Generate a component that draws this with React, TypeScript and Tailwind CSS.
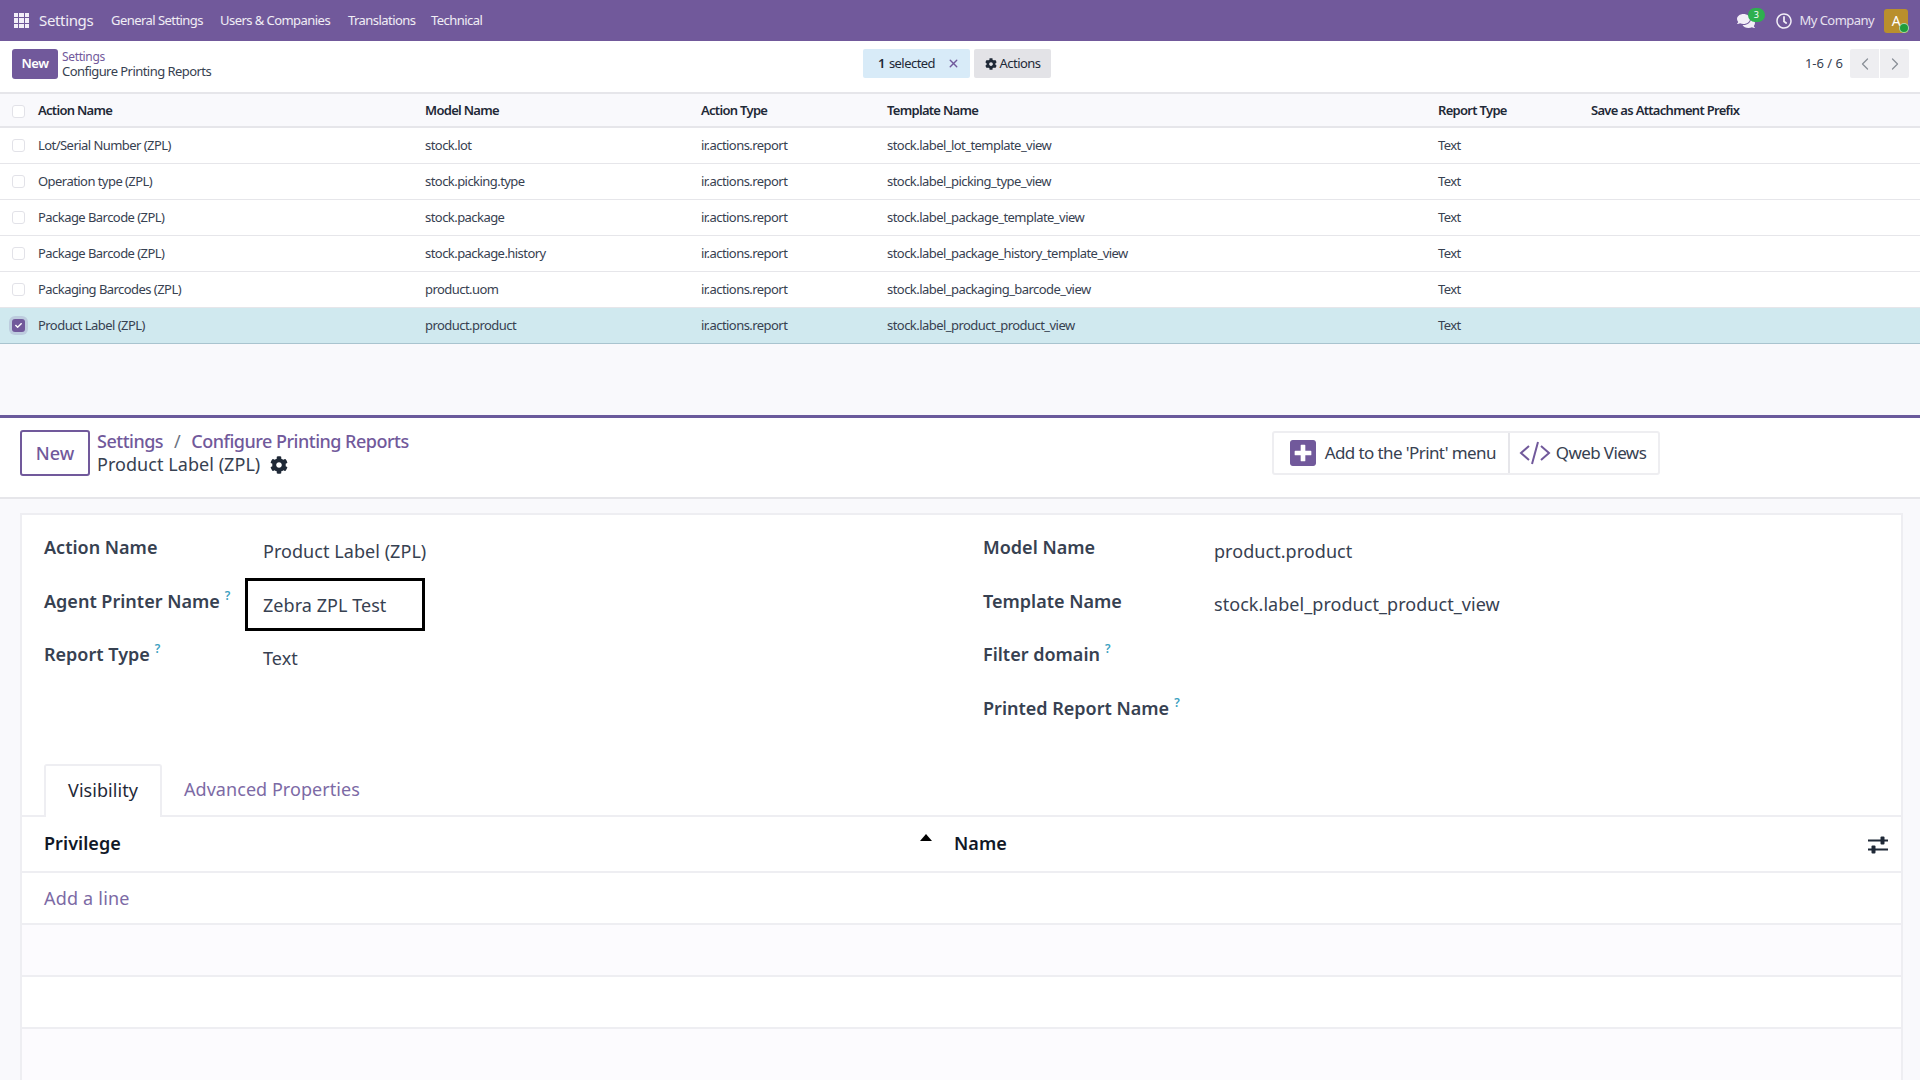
import React from "react";
import { FaCog, FaComments, FaRegClock, FaPlusSquare, FaCheck } from "react-icons/fa";
import { ChevronLeft, ChevronRight, X } from "lucide-react";

const rows = [
  ["Lot/Serial Number (ZPL)", "stock.lot", "ir.actions.report", "stock.label_lot_template_view", "Text"],
  ["Operation type (ZPL)", "stock.picking.type", "ir.actions.report", "stock.label_picking_type_view", "Text"],
  ["Package Barcode (ZPL)", "stock.package", "ir.actions.report", "stock.label_package_template_view", "Text"],
  ["Package Barcode (ZPL)", "stock.package.history", "ir.actions.report", "stock.label_package_history_template_view", "Text"],
  ["Packaging Barcodes (ZPL)", "product.uom", "ir.actions.report", "stock.label_packaging_barcode_view", "Text"],
  ["Product Label (ZPL)", "product.product", "ir.actions.report", "stock.label_product_product_view", "Text"],
];

const cols = "grid grid-cols-[38px_387px_276px_186px_551px_153px_1fr] items-center";

function Box() {
  return <span className="ml-[12px] block w-[13px] h-[13px] rounded-[3px] border border-[#e2e2e8] bg-white" />;
}

function Help() {
  return <sup className="ml-[5px] text-[12px] font-semibold text-[#3aa0c0] -top-[8px] relative">?</sup>;
}

function Label({ children, help }: { children: React.ReactNode; help?: boolean }) {
  return (
    <span className="text-[18px] font-semibold tracking-[0px] text-[#374151] whitespace-nowrap">
      {children}
      {help && <Help />}
    </span>
  );
}

export default function App() {
  return (
    <div className="h-[1080px] w-[1920px] overflow-hidden flex flex-col bg-[#f9f9fc] font-['Noto_Sans',sans-serif] text-[13px] tracking-[-0.55px] text-[#374151]">
      <header className="h-[41px] shrink-0 bg-[#71599b] flex items-center text-white/90">
        <span className="ml-[14px] grid grid-cols-3 gap-[1px] w-[15px] h-[15px]">
          {Array.from({ length: 9 }).map((_, i) => (
            <span key={i} className="bg-[#f3eff8]" />
          ))}
        </span>
        <span className="ml-[10px] text-[15px] tracking-[-0.35px] w-[72px]">Settings</span>
        <nav className="flex mt-[1px]">
          <span className="w-[109px]">General Settings</span>
          <span className="w-[128px]">Users &amp; Companies</span>
          <span className="w-[83px]">Translations</span>
          <span>Technical</span>
        </nav>
        <div className="ml-auto flex items-center">
          <span className="relative mr-[21px]">
            <FaComments className="w-[18px] h-[16px] text-[#f3eff8]" />
            <span className="absolute -top-[5px] left-[11px] w-[17px] h-[14px] rounded-full bg-[#2eb04f] text-[9px] leading-[14px] text-center text-white">3</span>
          </span>
          <FaRegClock className="w-[16px] h-[16px] text-[#f3eff8] mr-[8px]" />
          <span className="mr-[10px] text-[#e8e2f0]">My Company</span>
          <span className="relative w-[24px] h-[24px] mr-[12px] rounded-[3px] bg-[#b98f2d] flex items-center justify-center text-white text-[14px]">
            A
            <span className="absolute -right-[1px] bottom-0 w-[10px] h-[10px] rounded-full bg-[#1f9d3a] border-[1px] border-white/60" />
          </span>
        </div>
      </header>

      <div className="h-[53px] shrink-0 bg-white border-b-2 border-[#e6e6ea] flex items-start pt-[8px]">
        <div className="w-[863px] flex pl-[12px]">
          <button className="w-[46px] h-[30px] rounded-[3px] bg-[#71599b] text-white font-semibold">New</button>
          <div className="ml-[4px] pt-[1px]">
            <div className="text-[12px] tracking-[-0.35px] text-[#71599b] leading-[14px]">Settings</div>
            <div className="leading-[15px]">Configure Printing Reports</div>
          </div>
        </div>
        <div className="w-[107px] h-[29px] rounded-[2px] bg-[#d8ebf8] flex items-center pl-[15px] text-[#1f2937]">
          <b className="font-semibold">1</b>
          <span className="ml-[4px]">selected</span>
          <X className="ml-[12px] w-[13px] h-[13px] text-[#71599b]" strokeWidth={2.5} />
        </div>
        <div className="ml-[4px] w-[77px] h-[29px] rounded-[2px] bg-[#e3e3e7] flex items-center justify-center text-[#1f2937]">
          <FaCog className="w-[12px] h-[12px] mr-[3px]" />
          Actions
        </div>
        <div className="ml-auto flex items-center h-[29px] mr-[11px]">
          <span className="mr-[7px] tracking-[0px]">1-6 / 6</span>
          <span className="w-[29px] h-[29px] bg-[#eeeef1] flex items-center justify-center mr-[1px] rounded-l-[2px]">
            <ChevronLeft className="w-[20px] h-[20px] text-[#8a8f98]" strokeWidth={1.5} />
          </span>
          <span className="w-[29px] h-[29px] bg-[#eeeef1] flex items-center justify-center rounded-r-[2px]">
            <ChevronRight className="w-[20px] h-[20px] text-[#8a8f98]" strokeWidth={1.5} />
          </span>
        </div>
      </div>

      <div className="bg-white">
        <div className={`${cols} h-[34px] pt-[2px] bg-[#f9f9fc] border-b-2 border-[#e6e6ea] font-semibold tracking-[-0.7px] text-[#1f2937]`}>
          <Box />
          <span>Action Name</span>
          <span>Model Name</span>
          <span>Action Type</span>
          <span>Template Name</span>
          <span>Report Type</span>
          <span>Save as Attachment Prefix</span>
        </div>
        {rows.map((r, i) => {
          const sel = i === 5;
          return (
            <div
              key={i}
              className={`${cols} h-[36px] border-b ${sel ? "bg-[#d0e9ef] border-[#a9c4cf]" : "border-[#e6e6ea]"}`}
            >
              {sel ? (
                <span className="ml-[12px] w-[13px] h-[13px] rounded-[3px] bg-[#71599b] flex items-center justify-center ring-[3px] ring-[#71599b]/20">
                  <FaCheck className="w-[7px] h-[7px] text-white" />
                </span>
              ) : (
                <Box />
              )}
              {r.map((c, j) => (
                <span key={j} className="whitespace-nowrap">{c}</span>
              ))}
            </div>
          );
        })}
      </div>

      <div className="h-[71px] shrink-0" />
      <div className="h-[3px] shrink-0 bg-[#6a5a9c]" />

      <div className="h-[81px] shrink-0 bg-white border-b-2 border-[#e6e6ea] flex items-start pt-[13px] pl-[20px] text-[18px] tracking-[0.05px]">
        <button className="w-[70px] h-[46px] -mt-[1px] rounded-[3px] border-2 border-[#71599b] text-[#71599b] font-medium bg-white">New</button>
        <div className="ml-[7px] -mt-[2px]">
          <div className="flex font-medium tracking-[-0.5px] text-[#71599b] h-[24px] items-center">
            <span>Settings</span>
            <span className="mx-[11px] font-normal text-[#6b7280]">/</span>
            <span>Configure Printing Reports</span>
          </div>
          <div className="flex items-center h-[23px]">
            Product Label (ZPL)
            <FaCog className="ml-[10px] w-[18px] h-[18px] text-[#1f2937]" />
          </div>
        </div>
        <div className="ml-[863px] flex h-[44px] w-[388px] rounded-[3px] border-2 border-[#eeeef1] bg-white text-[17px] tracking-[-0.6px]">
          <div className="w-[236px] flex items-center pl-[16px] border-r-2 border-[#e6e6ea]">
            <FaPlusSquare className="w-[26px] h-[30px] text-[#71599b]" />
            <span className="ml-[9px] whitespace-nowrap">Add to the 'Print' menu</span>
          </div>
          <div className="flex items-center pl-[9px]">
            <svg viewBox="0 0 32 24" className="w-[32px] h-[26px] text-[#71599b]" fill="none" stroke="currentColor" strokeWidth="2">
              <path d="M10 5 2 12l8 7" />
              <path d="M22 5l8 7-8 7" />
              <path d="M19 1 13 23" />
            </svg>
            <span className="ml-[5px] whitespace-nowrap">Qweb Views</span>
          </div>
        </div>
      </div>

      <div className="flex-1 min-h-0 pt-[14px] pl-[20px] pr-[17px]">
        <div className="h-full bg-white border-2 border-b-0 border-[#eeeef2] text-[18px] tracking-[0.05px]">
          <div className="grid grid-cols-[939px_1fr] pt-[6px] pl-[22px]">
            <div>
              <div className="h-[53.5px] flex items-center">
                <span className="w-[219px]"><Label>Action Name</Label></span>
                <span className="pt-[7px]">Product Label (ZPL)</span>
              </div>
              <div className="h-[53.5px] flex items-center">
                <span className="w-[201px]"><Label help>Agent Printer Name</Label></span>
                <span className="w-[180px] h-[53px] mt-[6px] border-[3px] border-black pl-[15px] pt-[2px] flex items-center">Zebra ZPL Test</span>
              </div>
              <div className="h-[53.5px] flex items-center">
                <span className="w-[219px]"><Label help>Report Type</Label></span>
                <span className="pt-[7px]">Text</span>
              </div>
              <div className="h-[53.5px]" />
            </div>
            <div>
              <div className="h-[53.5px] flex items-center">
                <span className="w-[231px]"><Label>Model Name</Label></span>
                <span className="pt-[7px]">product.product</span>
              </div>
              <div className="h-[53.5px] flex items-center">
                <span className="w-[231px]"><Label>Template Name</Label></span>
                <span className="pt-[7px]">stock.label_product_product_view</span>
              </div>
              <div className="h-[53.5px] flex items-center">
                <Label help>Filter domain</Label>
              </div>
              <div className="h-[53.5px] flex items-center">
                <Label help>Printed Report Name</Label>
              </div>
            </div>
          </div>

          <div className="mt-[29px] h-[53px] border-b-2 border-[#eeeef2] flex items-end pl-[22px]">
            <span className="w-[118px] h-[53px] -mb-[2px] pb-[2px] bg-white border-2 border-b-0 border-[#eeeef2] rounded-t-[3px] flex items-center justify-center text-[#1f2937]">Visibility</span>
            <span className="h-[51px] ml-[22px] flex items-center text-[#7c6aa5]">Advanced Properties</span>
          </div>

          <div className="h-[56px] pb-[2px] border-b-2 border-[#eeeef2] flex items-center pl-[22px] font-semibold text-[#111827] relative">
            <span className="w-[906px]">Privilege</span>
            <span className="w-0 h-0 border-x-[6px] border-x-transparent border-b-[7px] border-b-black -mt-[11px] -ml-[30px]" />
            <span className="ml-[22px]">Name</span>
            <svg viewBox="0 0 20 18" className="absolute right-[13px] top-[19px] w-[20px] h-[18px] text-[#1f2937]" fill="currentColor">
              <rect x="0" y="3.5" width="20" height="2" />
              <rect x="12.5" y="0.5" width="4" height="8" rx="1" />
              <rect x="0" y="12.5" width="20" height="2" />
              <rect x="3.5" y="9.5" width="4" height="8" rx="1" />
            </svg>
          </div>
          <div className="h-[52px] border-b-2 border-[#eeeef2] flex items-center pl-[22px] tracking-[0.2px] text-[#7c6aa5]">Add a line</div>
          <div className="h-[52px] border-b-2 border-[#eeeef2] bg-[#fcfbfe]" />
          <div className="h-[52px] border-b-2 border-[#eeeef2]" />
          <div className="h-[52px] bg-[#fcfbfe]" />
        </div>
      </div>
    </div>
  );
}
